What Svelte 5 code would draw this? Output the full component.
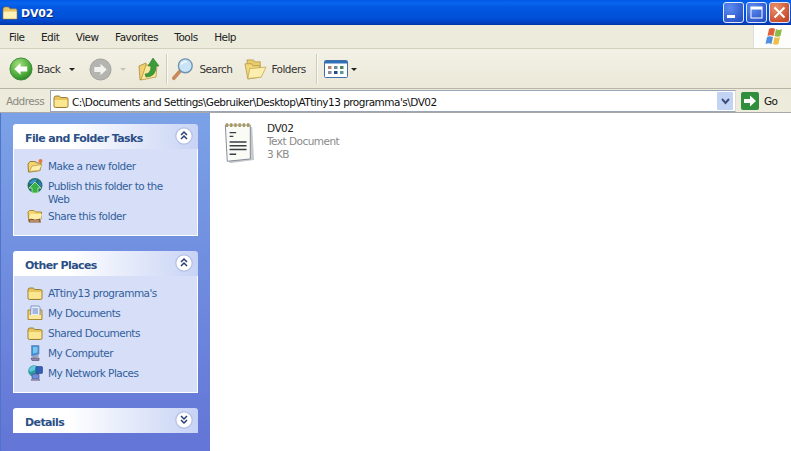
<script lang="ts">
	const tasks = [
		{ icon: 'newfolder', label: 'Make a new folder' },
		{ icon: 'publish', label: 'Publish this folder to the Web' },
		{ icon: 'share', label: 'Share this folder' }
	];
	const places = [
		{ icon: 'folder', label: "ATtiny13 programma's" },
		{ icon: 'docs', label: 'My Documents' },
		{ icon: 'folder', label: 'Shared Documents' },
		{ icon: 'computer', label: 'My Computer' },
		{ icon: 'network', label: 'My Network Places' }
	];
	const menus = ['File', 'Edit', 'View', 'Favorites', 'Tools', 'Help'];
</script>

{#snippet folder()}
	<svg width="16" height="16" viewBox="0 0 16 16">
		<path d="M1 5 Q1 3 3 3 H6 Q7 3 7.5 4.5 H13.5 Q15 4.5 15 6 V13 Q15 14.5 13.5 14.5 H2.5 Q1 14.5 1 13 Z" fill="#e9c65c" stroke="#9a7f3c" stroke-width="1" />
		<path d="M1.7 7 H14.3 V12.5 Q14.3 13.8 13 13.8 H3 Q1.7 13.8 1.7 12.5 Z" fill="#fbe692" />
	</svg>
{/snippet}

{#snippet smallIcon(name: string)}
	{#if name === 'folder'}
		{@render folder()}
	{:else if name === 'newfolder'}
		<svg width="16" height="16" viewBox="0 0 16 16">
			<path d="M1 6 L3 3.5 H8 L10 5 H14 L13 12.5 L3 14 H1.5 Z" fill="#f3d46e" stroke="#9c7a34" />
			<path d="M2.5 13.5 L5 8 L15 6.5 L12.5 12.5 Z" fill="#fdeeaa" stroke="#b8963f" stroke-width="0.7" />
			<circle cx="13.5" cy="3" r="2" fill="#e8763a" />
		</svg>
	{:else if name === 'publish'}
		<svg width="16" height="16" viewBox="0 0 16 16">
			<circle cx="8" cy="7.5" r="7.5" fill="#1f6f62" />
			<path d="M2 5 Q6 0 10 1.5 L8 5 L4 6 Z" fill="#3f8fcc" />
			<path d="M11 2 Q15 5 15 9 L12 7 Z" fill="#2f7fc0" />
			<path d="M8 4 L14 10 H11 V15 H5 V10 H2 Z" fill="#35b044" stroke="#c8ecc0" stroke-width="0.8" />
		</svg>
	{:else if name === 'share'}
		<svg width="16" height="16" viewBox="0 0 16 16">
			<path d="M1 4 L2.5 2.5 H7 L8.5 4 H14.5 L14 11 H1.5 Z" fill="#f3d46e" stroke="#a88a3a" />
			<path d="M2 11 L3.5 6 H15 L13.5 11 Z" fill="#fdeeaa" />
			<path d="M1 11.5 Q5 10 8 12 L13 10.5 L14 14.5 H2 Z" fill="#8a5a34" />
			<path d="M3 13 H12" stroke="#e9b98a" stroke-width="1" />
		</svg>
	{:else if name === 'docs'}
		<svg width="16" height="16" viewBox="0 0 16 16">
			<path d="M1 5 H15 V14.5 H1 Z" fill="#f0ce66" stroke="#a88a3a" />
			<path d="M4 1 H12 L13 2.5 V11 H3.5 Z" fill="#e8eefb" stroke="#6a83b8" stroke-width="0.8" />
			<path d="M5.5 4 H11 M5.5 6 H11 M5.5 8 H11" stroke="#5f7fc0" stroke-width="1" />
			<path d="M2 10 H14 V14 H2 Z" fill="#fbe89a" />
		</svg>
	{:else if name === 'computer'}
		<svg width="16" height="16" viewBox="0 0 16 16">
			<path d="M4.5 0.5 H12 V9 L7 11 H4.5 Z" fill="#3f8fd8" stroke="#6d86b0" stroke-width="0.7" />
			<path d="M6 2 H10.5 V7.5 L6 8.5 Z" fill="#78c6ee" />
			<path d="M5 11 L11.5 9.5 V12 L6 13 Z" fill="#9aa6c0" />
			<path d="M4 13 H12 V15.5 H5 Z" fill="#8c88a8" stroke="#5b5878" stroke-width="0.7" />
		</svg>
	{:else}
		<svg width="16" height="16" viewBox="0 0 16 16">
			<circle cx="7" cy="6" r="5.8" fill="#2f9aa0" />
			<path d="M2 4 Q5 0 9 1 L8 5 L3 7 Z" fill="#62c9e0" />
			<rect x="9" y="1.5" width="6.5" height="7" rx="1" fill="#2f5fb8" stroke="#24407e" stroke-width="0.6" />
			<rect x="5" y="9" width="7" height="5" rx="1" fill="#6d8fe0" stroke="#4a4a78" stroke-width="0.7" />
			<rect x="4" y="14" width="9" height="1.8" fill="#8c88a8" />
		</svg>
	{/if}
{/snippet}

{#snippet chevrons(down: boolean)}
	<span class="chev">
		<svg width="18" height="18" viewBox="0 0 18 18">
			<circle cx="9" cy="9" r="8.2" fill="#fff" stroke="#b4c0e4" stroke-width="1.2" />
			<path
				d={down ? 'M6 5 L9 8 L12 5 M6 9 L9 12 L12 9' : 'M6 8 L9 5 L12 8 M6 12 L9 9 L12 12'}
				fill="none"
				stroke="#2a3f78"
				stroke-width="1.5"
			/>
		</svg>
	</span>
{/snippet}

<div class="window">
	<header class="titlebar">
		<svg class="title-icon" width="16" height="14" viewBox="0 0 17 15">
			<path d="M1 3 L2.5 1 H7 L8.5 3 H15 L16 4 V14 H1 Z" fill="#e8c566" stroke="#8a7240" stroke-width="0.7" />
			<path d="M1.5 6 H15.5 V13.5 H1.5 Z" fill="#fdf0b8" />
		</svg>
		<span class="title">DV02</span>
		<div class="winbtns">
			<span class="winbtn">
				<svg width="21" height="21" viewBox="0 0 21 21"><rect x="4" y="13" width="8" height="3" fill="#fff" /></svg>
			</span>
			<span class="winbtn">
				<svg width="21" height="21" viewBox="0 0 21 21"><rect x="5" y="5" width="11" height="11" fill="none" stroke="#fff" /><rect x="5" y="5" width="11" height="2.5" fill="#fff" /></svg>
			</span>
			<span class="winbtn close">
				<svg width="21" height="21" viewBox="0 0 21 21"><path d="M5.5 5.5 L15.5 15.5 M15.5 5.5 L5.5 15.5" stroke="#fff" stroke-width="2" /></svg>
			</span>
		</div>
	</header>

	<nav class="menubar">
		{#each menus as m}
			<span class="menu">{m}</span>
		{/each}
		<div class="flag">
			<svg width="24" height="22" viewBox="0 0 24 22">
				<path d="M8 3 Q11 1 14 3 L12.5 10 Q10 8.5 6.5 10 Z" fill="#e0603a" />
				<path d="M15 3 Q18 5 21 3 L19.5 10 Q16.5 11.5 13.5 10 Z" fill="#8dbb4a" />
				<path d="M6 11 Q9 9.5 12 11 L10.5 18 Q7.5 16.5 4.5 18 Z" fill="#4f8fdc" />
				<path d="M13.5 11 Q16 12.5 19 11 L17.5 18 Q15 19.5 12 18 Z" fill="#eec04a" />
			</svg>
		</div>
	</nav>

	<div class="toolbar">
		<div class="tool back">
			<svg width="24" height="24" viewBox="0 0 25 25">
				<defs>
					<radialGradient id="gb" cx="0.4" cy="0.3" r="0.8">
						<stop offset="0" stop-color="#a5de7e" />
						<stop offset="0.6" stop-color="#4fae3c" />
						<stop offset="1" stop-color="#1f7a22" />
					</radialGradient>
				</defs>
				<circle cx="12.5" cy="12.5" r="11.5" fill="url(#gb)" stroke="#3f8a3a" />
				<path d="M5.5 12.5 L12 6.5 V10 H19 V15 H12 V18.5 Z" fill="#fff" />
			</svg>
			<span>Back</span>
			<i class="caret"></i>
		</div>
		<div class="tool fwd">
			<svg width="23" height="23" viewBox="0 0 24 24">
				<circle cx="12" cy="12" r="11" fill="#b4b4b0" stroke="#a2a29c" />
				<path d="M18.5 12 L12 6 V9.5 H5.5 V14.5 H12 V18 Z" fill="#f2f2ee" />
			</svg>
			<i class="caret dim"></i>
		</div>
		<div class="tool up">
			<svg width="22" height="24" viewBox="0 0 22 24">
				<path d="M1 9 L8 6 V20 L2 23 Z" fill="#f0d070" stroke="#a88a3a" stroke-width="0.8" />
				<path d="M8 8 H19 L18 20 L3 23 Z" fill="#f9e89e" stroke="#b8963f" stroke-width="0.8" />
				<path d="M7 17 Q13 17 13 9 H10 L15 1 L21 9 H18 Q18 20 8 20 Z" fill="#3c9c3a" stroke="#2a7a2c" stroke-width="0.6" />
			</svg>
		</div>
		<i class="sep"></i>
		<div class="tool search">
			<svg width="24" height="24" viewBox="0 0 26 26">
				<path d="M3 23 L10 15" stroke="#c88a5a" stroke-width="4" stroke-linecap="round" />
				<circle cx="15.5" cy="9.5" r="7.5" fill="#c8e4f6" stroke="#6f94b4" stroke-width="1.5" />
				<path d="M11 8 Q13 5 17 5" stroke="#fff" stroke-width="1.5" fill="none" />
			</svg>
			<span>Search</span>
		</div>
		<div class="tool folders">
			<svg width="23" height="22" viewBox="0 0 24 23">
				<path d="M3 2 H10 L11 4 H17 L17 18 H5 Z" fill="#eacb6a" stroke="#b3954a" stroke-width="0.8" />
				<path d="M1 6 H8 L9 8 H16 L17 20 L4 22 Z" fill="#f2d878" stroke="#b3954a" stroke-width="0.8" />
				<path d="M4 21.5 L6 11 L23 9.5 L18 20 Z" fill="#fbeeae" stroke="#c2a352" stroke-width="0.8" />
			</svg>
			<span>Folders</span>
		</div>
		<i class="sep"></i>
		<div class="tool views">
			<svg width="24" height="18" viewBox="0 0 24 18">
				<rect x="0.5" y="0.5" width="23" height="17" rx="1" fill="#fff" stroke="#3f6fa8" />
				<rect x="1" y="1" width="22" height="2.5" fill="#2f6fb8" />
				<rect x="4" y="6" width="3.5" height="3" fill="#b87f70" />
				<rect x="10" y="6" width="3.5" height="3" fill="#6a8a9c" />
				<rect x="16" y="6" width="3.5" height="3" fill="#4a8a5a" />
				<rect x="4" y="11" width="3.5" height="3" fill="#8a8aa0" />
				<rect x="10" y="11" width="3.5" height="3" fill="#2a4a8a" />
				<rect x="16" y="11" width="3.5" height="3" fill="#5a9a9c" />
			</svg>
			<i class="caret"></i>
		</div>
	</div>

	<div class="addressbar">
		<span class="addr-label">Address</span>
		<div class="addr-box">
			{@render folder()}
			<span class="path">C:\Documents and Settings\Gebruiker\Desktop\ATtiny13 programma's\DV02</span>
			<span class="combo">
				<svg width="9" height="7" viewBox="0 0 9 7"><path d="M1 1 L4.5 5 L8 1" fill="none" stroke="#3a4f7c" stroke-width="2" /></svg>
			</span>
		</div>
		<div class="go">
			<span class="go-icon">
				<svg width="18" height="18" viewBox="0 0 18 18">
					<rect width="18" height="18" rx="2" fill="#2f8f3c" />
					<path d="M3 7 H9 V3.5 L15 9 L9 14.5 V11 H3 Z" fill="#fff" />
				</svg>
			</span>
			<span>Go</span>
		</div>
	</div>

	<div class="content">
		<aside class="sidebar">
			<section class="panel">
				<div class="panel-head">
					<span>File and Folder Tasks</span>
					{@render chevrons(false)}
				</div>
				<div class="panel-body tasks">
					{#each tasks as t}
						<div class="link">
							{@render smallIcon(t.icon)}
							<span>{t.label}</span>
						</div>
					{/each}
				</div>
			</section>
			<section class="panel">
				<div class="panel-head">
					<span>Other Places</span>
					{@render chevrons(false)}
				</div>
				<div class="panel-body places">
					{#each places as p}
						<div class="link">
							{@render smallIcon(p.icon)}
							<span>{p.label}</span>
						</div>
					{/each}
				</div>
			</section>
			<section class="panel">
				<div class="panel-head">
					<span>Details</span>
					{@render chevrons(true)}
				</div>
			</section>
		</aside>

		<main class="files">
			<div class="file">
				<svg class="note" width="32" height="46" viewBox="0 0 34 46">
					<path d="M4 7 H31 L33 42 L7 45.5 Z" fill="#c6c9ce" />
					<path d="M2.5 5 H29 V41 L4.5 43.5 Z" fill="#fbfbf6" stroke="#7f8694" />
					<path d="M3 5 H29" stroke="#a89a5c" stroke-width="4" stroke-dasharray="2.5 2" />
					<path d="M7 13 H14 M7 17 H11 M7 23 H25 M7 27 H25 M7 31 H25 M7 36 H14" stroke="#3a3e46" stroke-width="1.4" />
				</svg>
				<div class="file-text">
					<span class="file-name">DV02</span>
					<span class="file-meta">Text Document</span>
					<span class="file-meta">3 KB</span>
				</div>
			</div>
		</main>
	</div>
</div>

<style>
	:global(body) {
		margin: 0;
		overflow: hidden;
	}
	.window {
		width: 791px;
		height: 451px;
		display: flex;
		flex-direction: column;
		overflow: hidden;
		font-family: 'DejaVu Sans', sans-serif;
		font-size: 10.5px;
		letter-spacing: -0.52px;
		color: #222;
		background: #fff;
	}
	.titlebar {
		height: 25px;
		flex: none;
		display: flex;
		align-items: center;
		padding: 0 1px 0 2px;
		box-sizing: border-box;
		gap: 3px;
		background: linear-gradient(#0058e4 0, #0a66ee 3px, #0256e0 8px, #0050d8 18px, #0140c0 23px, #00339e 25px);
	}
	.title {
		color: #fff;
		font-weight: bold;
		font-size: 11px;
		letter-spacing: -0.2px;
		padding-top: 1px;
		text-shadow: 1px 1px 0 #0a2a80;
	}
	.winbtns {
		margin-left: auto;
		display: flex;
		gap: 2px;
	}
	.winbtn {
		width: 21px;
		height: 21px;
		box-sizing: border-box;
		border: 1px solid #dfe8fa;
		border-radius: 3px;
		background: radial-gradient(circle at 30% 25%, #5d8cf0, #2a55c8 80%);
		display: flex;
		align-items: center;
		justify-content: center;
	}
	.winbtn svg {
		margin: -1px;
		flex: none;
	}
	.winbtn.close {
		background: radial-gradient(circle at 30% 25%, #e8926e, #c84a2a 80%);
	}
	.menubar {
		height: 24px;
		flex: none;
		display: flex;
		align-items: center;
		padding-left: 3px;
		box-sizing: border-box;
		background: #ecebdc;
		border-bottom: 1px solid #d4d0bd;
	}
	.menu {
		padding: 0 7px 0 6px;
		margin-right: 3.5px;
		color: #222;
	}
	.flag {
		margin-left: auto;
		width: 38px;
		height: 23px;
		background: #fdfdfb;
		border-left: 1px solid #ddd;
		display: flex;
		align-items: center;
		justify-content: center;
		box-sizing: border-box;
	}
	.toolbar {
		height: 40px;
		flex: none;
		display: flex;
		align-items: center;
		padding: 1px 0 0 9px;
		box-sizing: border-box;
		background: linear-gradient(#f3f1e6, #ebe8d8);
		border-bottom: 1px solid #b8b5a6;
		color: #333;
	}
	.tool {
		display: flex;
		align-items: center;
	}
	.back {
		gap: 4px;
	}
	.back .caret {
		margin-left: 5px;
	}
	.fwd {
		margin-left: 14px;
		gap: 8px;
	}
	.up {
		margin-left: 12px;
	}
	.sep {
		width: 1px;
		height: 30px;
		background: #cfccbb;
		margin: 0 4px 0 6px;
		box-shadow: 1px 0 0 #fafaf4;
	}
	.search {
		gap: 4px;
	}
	.folders {
		margin-left: 12px;
		gap: 4px;
		margin-right: 4px;
	}
	.views {
		margin-left: 3px;
		gap: 3px;
	}
	.caret {
		width: 0;
		height: 0;
		border: 3px solid transparent;
		border-top: 3px solid #222;
		border-bottom: 0;
	}
	.caret.dim {
		border-top-color: #c6c4b6;
	}
	.addressbar {
		height: 23px;
		flex: none;
		display: flex;
		align-items: center;
		padding-left: 6px;
		box-sizing: border-box;
		background: #ecebdc;
	}
	.addr-label {
		color: #8a8a80;
		width: 44px;
		flex: none;
	}
	.addr-box {
		flex: 1;
		height: 22px;
		margin-top: 1px;
		box-sizing: border-box;
		border: 1px solid #9aa5b5;
		border-right-color: #dcdcd0;
		background: #fff;
		display: flex;
		align-items: center;
		padding-left: 2px;
		gap: 3px;
		color: #111;
	}
	.path {
		flex: 1;
		padding-top: 1px;
	}
	.combo {
		width: 16px;
		height: 18px;
		margin-right: 2px;
		background: #c3d3f4;
		border-radius: 1px;
		display: flex;
		align-items: center;
		justify-content: center;
	}
	.go {
		width: 55px;
		flex: none;
		display: flex;
		align-items: center;
		gap: 5px;
		padding-left: 5px;
		box-sizing: border-box;
		color: #111;
	}
	.go-icon {
		display: flex;
	}
	.content {
		flex: 1;
		min-height: 0;
		display: flex;
		border-top: 1px solid #a6a8ac;
	}
	.sidebar {
		width: 210px;
		flex: none;
		box-sizing: border-box;
		padding: 11px 12px 0 12px;
		display: flex;
		flex-direction: column;
		gap: 15px;
		background: linear-gradient(#7ba2e7, #6375d6);
		border-left: 1px solid #4f74c8;
	}
	.panel-head {
		height: 25px;
		border-radius: 3px 3px 0 0;
		box-sizing: border-box;
		display: flex;
		align-items: center;
		justify-content: space-between;
		padding: 3px 5px 0 12px;
		background: linear-gradient(90deg, #fff 30%, #c8d3f5);
		color: #2b4f86;
		font-weight: bold;
		font-size: 11px;
		letter-spacing: -0.6px;
	}
	.chev {
		display: flex;
		margin-top: -4px;
	}
	.panel-body {
		background: #d6dff7;
		border: 1px solid #fff;
		border-top: 0;
		box-sizing: border-box;
		padding: 9px 10px 0 13px;
		color: #33609c;
	}
	.tasks {
		height: 87px;
	}
	.places {
		height: 117px;
	}
	.link {
		display: flex;
		gap: 5px;
		min-height: 20px;
		line-height: 13px;
	}
	.link svg {
		flex: none;
	}
	.link span {
		padding: 2px 0;
		max-width: 130px;
	}
	.files {
		flex: 1;
		padding: 6px 0 0 13px;
	}
	.file {
		display: flex;
		gap: 12px;
	}
	.file-text {
		display: flex;
		flex-direction: column;
		line-height: 13px;
		padding-top: 3px;
	}
	.file-name {
		color: #222;
	}
	.file-meta {
		color: #8a8a8a;
	}
</style>
